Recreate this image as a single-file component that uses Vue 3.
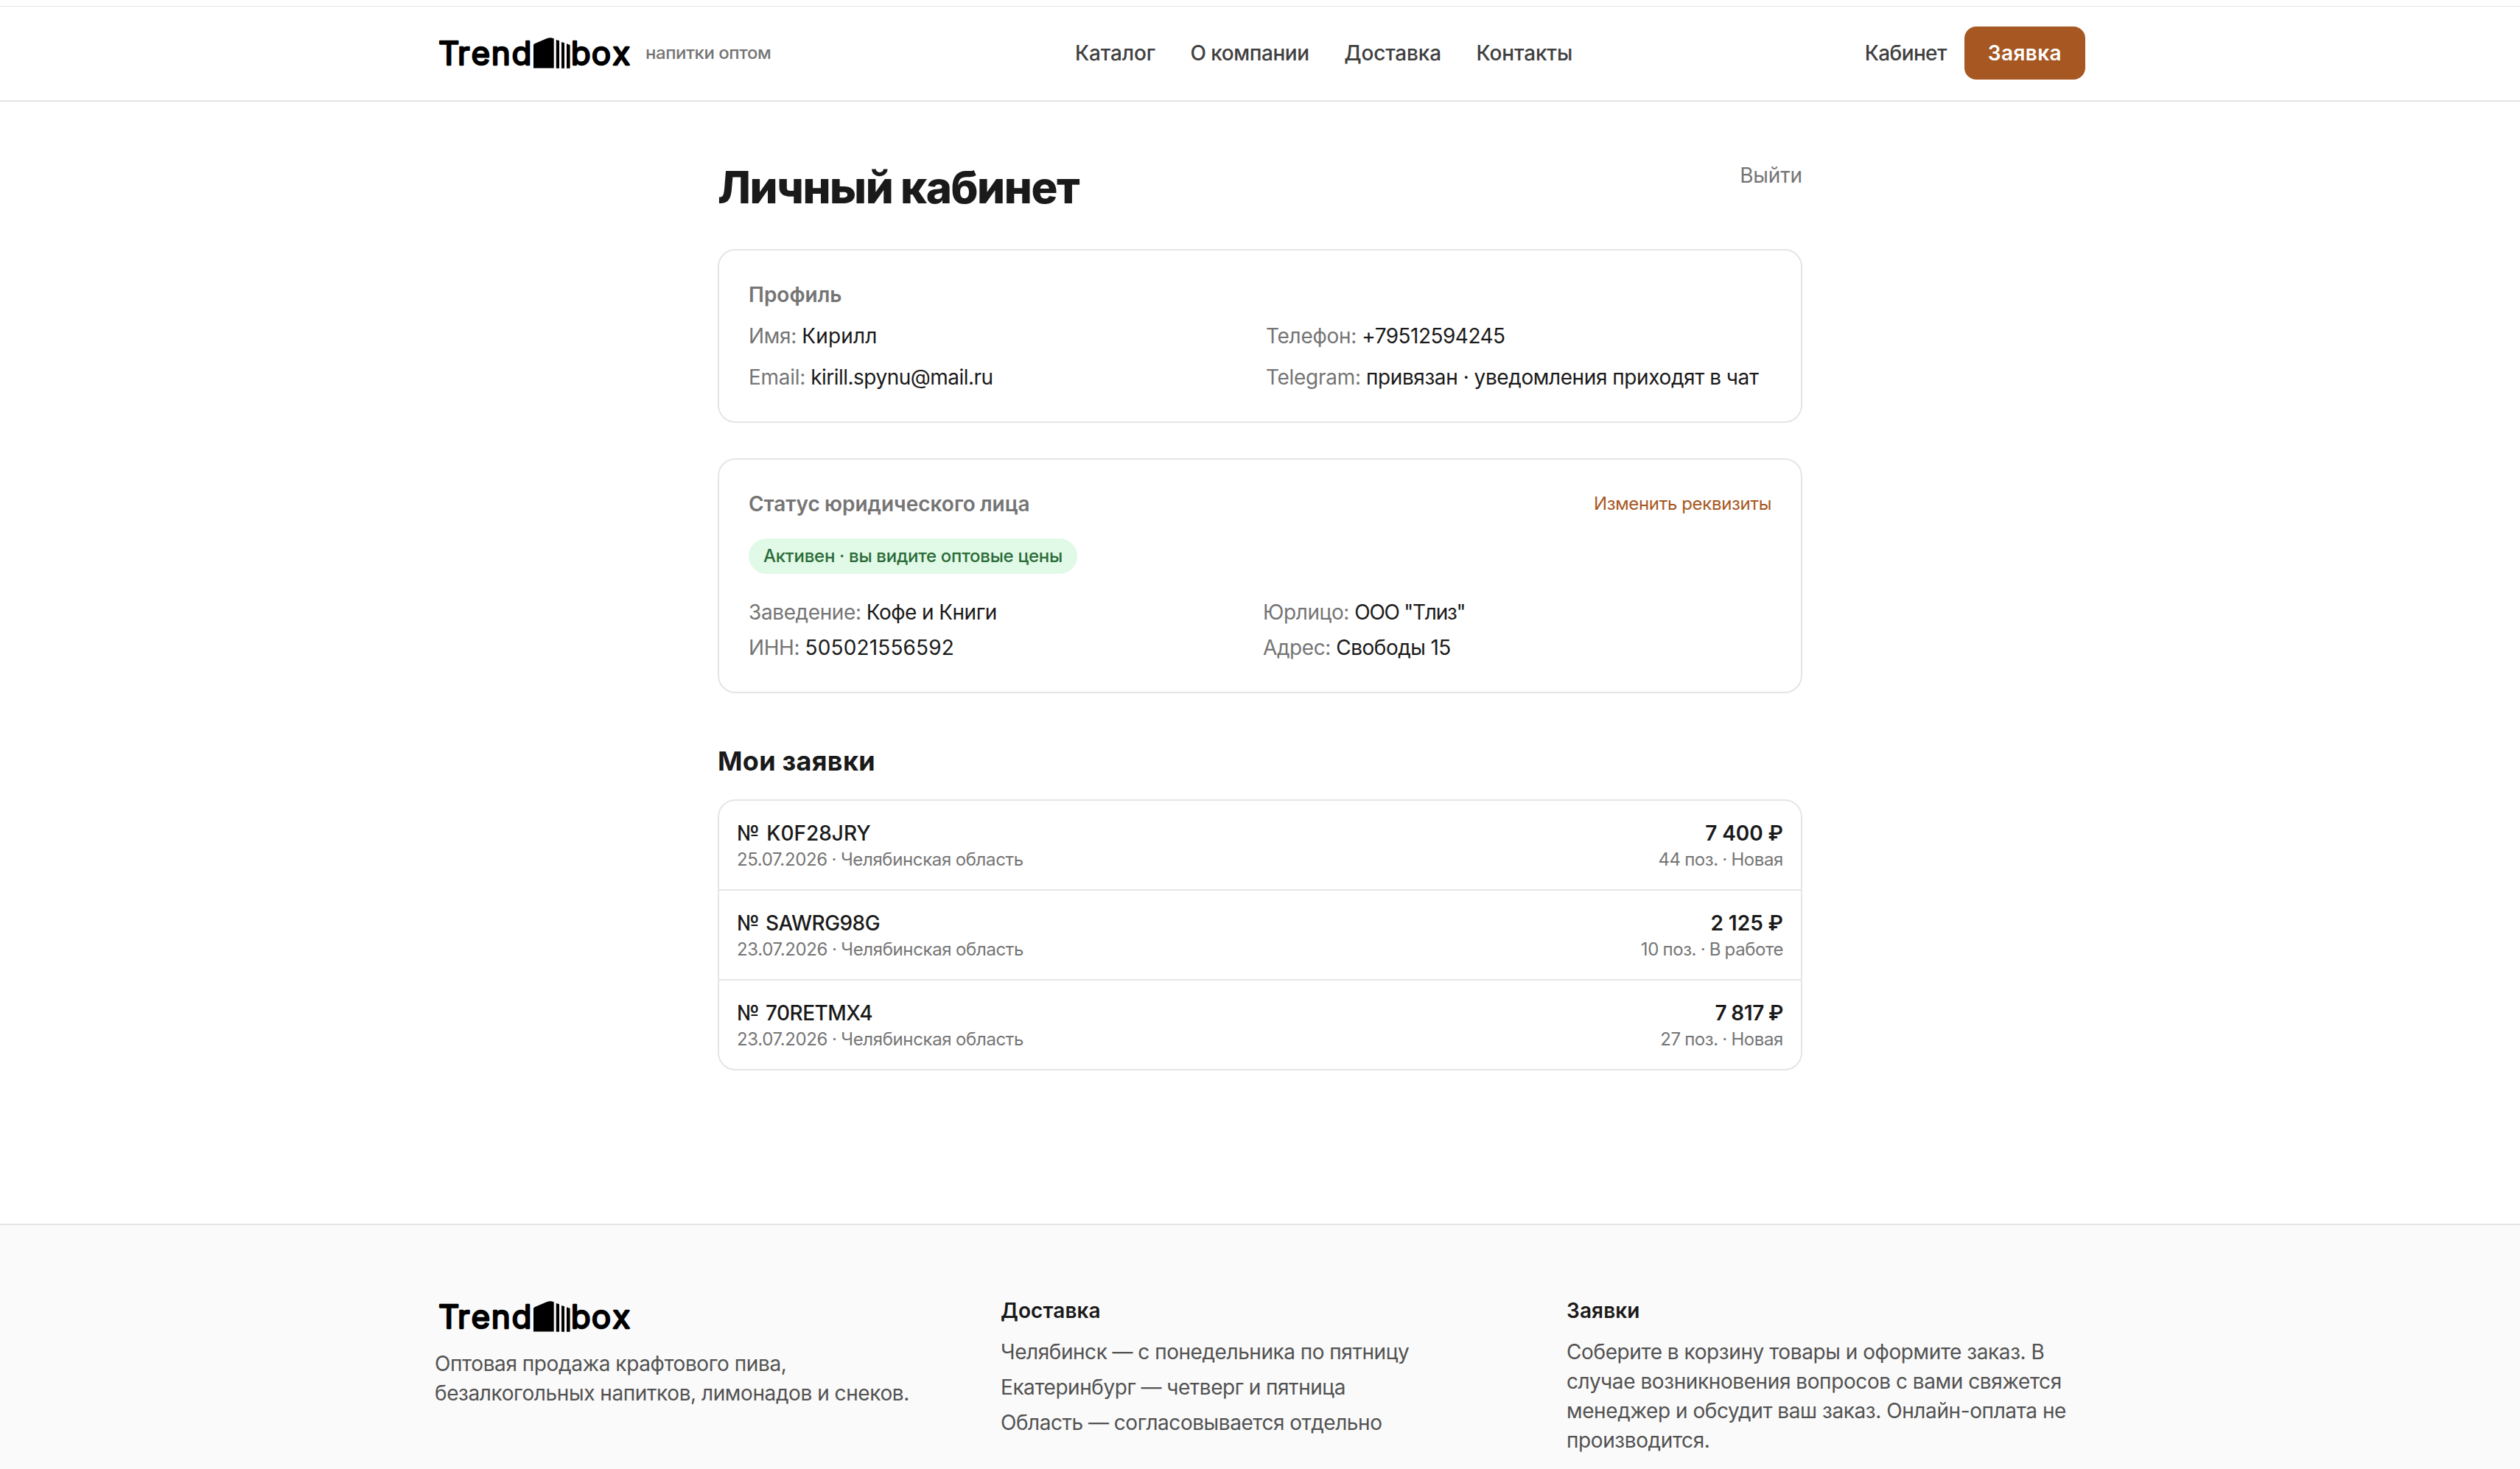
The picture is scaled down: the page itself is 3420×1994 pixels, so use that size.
<template>
  <div class="page">
    <div class="topline"></div>
    <header class="header">
      <div class="container header-inner">
        <div class="brand">
          <svg class="logo" viewBox="0 0 270 56" role="img" aria-label="Trendbox">
            <text y="44" x="5 31 49.5 76.7 104.4 184.7 212.7 241.2">Trendbox</text>
            <path d="M134 17.5 Q134 16 135.5 15.3 L152.5 8 Q155 7 158 7.2 L161.7 8.3 V48.6 H134 Z" />
            <path d="M164.8 10 L169 11.3 V48.8 H164.8 Z" />
            <path d="M172 13 L176 14.3 V48.8 H172 Z" />
            <path d="M179 15.3 L183.6 17 V48.8 H179 Z" />
          </svg>
          <span class="tagline">напитки оптом</span>
        </div>
        <nav class="nav">
          <a v-for="link in links" :key="link">{{ link }}</a>
        </nav>
        <div class="actions">
          <a class="account">Кабинет</a>
          <a class="cart">Заявка</a>
        </div>
      </div>
    </header>

    <main class="main">
      <div class="title-row">
        <h1>Личный кабинет</h1>
        <a class="logout">Выйти</a>
      </div>

      <section class="card">
        <h2 class="card-title">Профиль</h2>
        <div class="profile">
          <p v-for="field in profile" :key="field.label">
            <span class="label">{{ field.label }}:</span>&#32;<span :class="field.fit">{{ field.value }}</span>
          </p>
        </div>
      </section>

      <section class="card company">
        <div class="card-head">
          <h2 class="card-title">Статус юридического лица</h2>
          <a class="edit">Изменить реквизиты</a>
        </div>
        <span class="badge">Активен · вы видите оптовые цены</span>
        <div class="details">
          <p v-for="field in company" :key="field.label">
            <span class="label">{{ field.label }}:</span>&#32;<span :class="field.fit">{{ field.value }}</span>
          </p>
        </div>
      </section>

      <section class="orders">
        <h2>Мои заявки</h2>
        <ul class="order-list">
          <li v-for="order in orders" :key="order.id" class="order">
            <div>
              <p class="order-id">№ {{ order.id }}</p>
              <p class="order-meta">{{ order.date }} · {{ order.region }}</p>
            </div>
            <div class="order-right">
              <p class="order-sum">{{ order.sum }} ₽</p>
              <p class="order-meta">{{ order.count }} поз. · {{ order.status }}</p>
            </div>
          </li>
        </ul>
      </section>
    </main>

    <footer class="footer">
      <div class="container footer-grid">
        <div>
          <svg class="logo" viewBox="0 0 270 56" role="img" aria-label="Trendbox">
            <text y="44" x="5 31 49.5 76.7 104.4 184.7 212.7 241.2">Trendbox</text>
            <path d="M134 17.5 Q134 16 135.5 15.3 L152.5 8 Q155 7 158 7.2 L161.7 8.3 V48.6 H134 Z" />
            <path d="M164.8 10 L169 11.3 V48.8 H164.8 Z" />
            <path d="M172 13 L176 14.3 V48.8 H172 Z" />
            <path d="M179 15.3 L183.6 17 V48.8 H179 Z" />
          </svg>
          <p class="footer-text">Оптовая продажа крафтового пива,<br />безалкогольных напитков, лимонадов и снеков.</p>
        </div>
        <div>
          <h3>Доставка</h3>
          <ul class="delivery">
            <li v-for="row in delivery" :key="row">{{ row }}</li>
          </ul>
        </div>
        <div>
          <h3>Заявки</h3>
          <p class="footer-text">
            Соберите в корзину товары и оформите заказ. В<br />случае возникновения вопросов с вами свяжется<br />менеджер и обсудит ваш заказ. Онлайн-оплата не<br />производится.
          </p>
        </div>
      </div>
    </footer>
  </div>
</template>

<script setup>
const links = ['Каталог', 'О компании', 'Доставка', 'Контакты']

const profile = [
  { label: 'Имя', value: 'Кирилл', fit: 'loose' },
  { label: 'Телефон', value: '+79512594245', fit: 'tight' },
  { label: 'Email', value: 'kirill.spynu@mail.ru', fit: 'tight' },
  { label: 'Telegram', value: 'привязан · уведомления приходят в чат' }
]

const company = [
  { label: 'Заведение', value: 'Кофе и Книги', fit: 'tight' },
  { label: 'Юрлицо', value: 'ООО "Тлиз"', fit: 'tighter' },
  { label: 'ИНН', value: '505021556592', fit: 'loose' },
  { label: 'Адрес', value: 'Свободы 15', fit: 'tight' }
]

const orders = [
  { id: 'K0F28JRY', date: '25.07.2026', region: 'Челябинская область', sum: '7 400', count: 44, status: 'Новая' },
  { id: 'SAWRG98G', date: '23.07.2026', region: 'Челябинская область', sum: '2 125', count: 10, status: 'В работе' },
  { id: '70RETMX4', date: '23.07.2026', region: 'Челябинская область', sum: '7 817', count: 27, status: 'Новая' }
]

const delivery = [
  'Челябинск — с понедельника по пятницу',
  'Екатеринбург — четверг и пятница',
  'Область — согласовывается отдельно'
]
</script>

<style>
body {
  margin: 0;
  background: #fff;
}
</style>

<style scoped>
.page {
  display: flex;
  flex-direction: column;
  height: 1994px;
  overflow: hidden;
  font-family: Inter, "Noto Sans", sans-serif;
  font-size: 28px;
  line-height: 40px;
  letter-spacing: -0.4px;
  word-spacing: -0.2px;
  color: #1a1a1a;
  background: #fff;
}

h1,
h2,
h3,
p,
ul {
  margin: 0;
  padding: 0;
}

ul {
  list-style: none;
}

.container {
  box-sizing: border-box;
  width: 2304px;
  margin: 0 auto;
  padding: 0 32px;
}

/* header */
.topline {
  height: 1px;
  margin-top: 8px;
  background: #e5e5e5;
}

.header {
  border-bottom: 2px solid #e5e5e5;
}

.header-inner {
  display: flex;
  align-items: center;
  height: 127px;
  padding-bottom: 1px;
}

.brand {
  display: flex;
  align-items: center;
  gap: 16px;
  width: 869px;
}

.logo {
  display: block;
  width: 270px;
  height: 56px;
}

.logo text {
  font-family: Inter, sans-serif;
  font-size: 44px;
  font-weight: 400;
  letter-spacing: 0;
  stroke: #000;
  stroke-width: 2.3px;
  stroke-linejoin: round;
}

.tagline {
  font-size: 24px;
  line-height: 32px;
  font-weight: 500;
  letter-spacing: -0.42px;
  color: #757575;
}

.nav {
  display: flex;
  gap: 47.5px;
  font-weight: 500;
  letter-spacing: -0.15px;
  color: #404040;
}

.nav a:nth-child(2) {
  letter-spacing: -0.45px;
}

.actions {
  display: flex;
  align-items: center;
  gap: 24px;
  margin-left: auto;
}

.account {
  font-weight: 500;
  letter-spacing: -0.65px;
  color: #404040;
}

.cart {
  padding: 16px 32px;
  border-radius: 16px;
  font-weight: 600;
  letter-spacing: 0.4px;
  color: #fff;
  background: #a65722;
}

/* account page */
.main {
  box-sizing: border-box;
  width: 1472px;
  height: 1523px;
  margin: 0 auto;
  padding-top: 80px;
}

.title-row {
  display: flex;
  justify-content: space-between;
  align-items: flex-start;
  margin-bottom: 48px;
}

h1 {
  font-size: 60px;
  line-height: 72px;
  font-weight: 800;
  letter-spacing: -1.45px;
  word-spacing: -1px;
}

.logout {
  letter-spacing: -0.15px;
  color: #757575;
}

.card {
  box-sizing: border-box;
  height: 236px;
  padding: 40px;
  border: 2px solid #e5e5e5;
  border-radius: 24px;
}

.card-title {
  font-size: 28px;
  line-height: 40px;
  font-weight: 600;
  letter-spacing: 0;
  word-spacing: -1px;
  color: #757575;
}

.profile {
  display: grid;
  grid-template-columns: 1fr 1fr;
  gap: 16px;
  margin-top: 16px;
}

.label {
  color: #757575;
}

.profile .label {
  letter-spacing: -0.3px;
}

.loose {
  letter-spacing: 0.15px;
}

.tight {
  letter-spacing: -0.52px;
}

.tighter {
  letter-spacing: -1.25px;
}

.company {
  height: 319px;
  margin-top: 48px;
}

.card-head {
  display: flex;
  justify-content: space-between;
  align-items: center;
}

.edit {
  font-size: 24px;
  line-height: 32px;
  letter-spacing: -0.33px;
  color: #a65722;
}

.badge {
  display: block;
  width: fit-content;
  margin-top: 27px;
  padding: 8px 20px;
  border-radius: 24px;
  font-size: 24px;
  line-height: 32px;
  font-weight: 500;
  letter-spacing: -0.25px;
  color: #2a6b38;
  background: #e1f9e7;
}

.details {
  display: grid;
  grid-template-columns: 1fr 1fr;
  gap: 8px;
  margin-top: 32px;
}

.orders {
  margin-top: 64px;
}

.orders h2 {
  font-size: 36px;
  line-height: 56px;
  font-weight: 700;
  letter-spacing: 0.3px;
}

.order-list {
  margin-top: 24px;
  border: 2px solid #e5e5e5;
  border-radius: 24px;
}

.order {
  display: flex;
  justify-content: space-between;
  padding: 24px;
}

.order + .order {
  border-top: 2px solid #e5e5e5;
}

.order-id {
  font-weight: 500;
  letter-spacing: -0.55px;
  word-spacing: 2px;
}

.order:first-child .order-id {
  letter-spacing: 0;
}

.order-meta {
  font-size: 24px;
  line-height: 32px;
  letter-spacing: -0.36px;
  word-spacing: -0.6px;
  color: #757575;
}

.order-right {
  text-align: right;
}

.order-right .order-meta {
  letter-spacing: -0.4px;
  word-spacing: -0.8px;
}

.order-sum {
  font-weight: 600;
  letter-spacing: 0;
}

.order:last-child .order-sum {
  letter-spacing: -0.5px;
}

/* footer */
.footer {
  flex: 1;
  padding-top: 96px;
  border-top: 2px solid #e5e5e5;
  background: #fafafa;
}

.footer-grid {
  display: grid;
  grid-template-columns: repeat(3, 1fr);
  gap: 64px;
  color: #525252;
}

.footer-text {
  margin-top: 16px;
  white-space: nowrap;
}

h3 {
  font-size: 28px;
  line-height: 40px;
  font-weight: 600;
  letter-spacing: 0.1px;
  color: #1a1a1a;
}

.delivery {
  display: flex;
  flex-direction: column;
  gap: 8px;
  margin-top: 16px;
  letter-spacing: -0.45px;
}
</style>
